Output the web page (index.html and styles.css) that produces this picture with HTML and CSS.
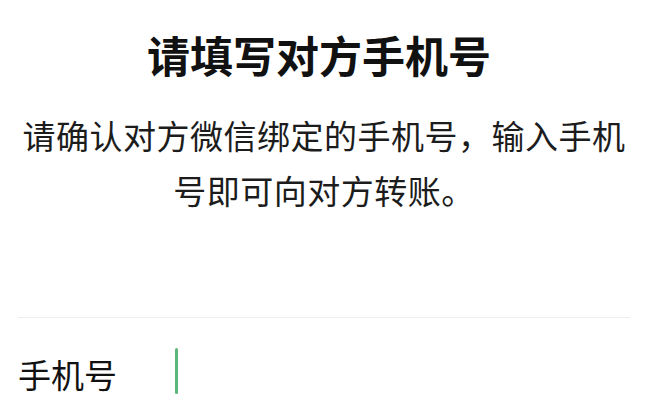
FILE: index.html
```html
<!DOCTYPE html>
<html lang="zh-CN">
<head>
    <meta charset="UTF-8">
    <title>转账到手机号</title>
    <meta name="viewport" content="width=device-width, initial-scale=1.0">
    <link rel="stylesheet" href="styles.css">
</head>
<body>
    <div class="page">
        <h1 class="title">请填写对方手机号</h1>
        <p class="desc">请确认对方微信绑定的手机号，输入手机号即可向对方转账。</p>
        <div class="field">
            <label class="label" for="phone">手机号</label>
            <span class="caret"></span>
        </div>
    </div>
</body>
</html>
```

FILE: styles.css
```css
* {
    box-sizing: border-box;
}

body {
    margin: 0;
    background-color: #fff;
    color: #111;
    font-family: "Noto Sans CJK SC", "Noto Sans", sans-serif;
}

.page {
    width: 666px;
    height: 400px;
    padding: 0 36px 0 18px;
    overflow: hidden;
}

.title {
    margin: 26px 10px 0 0;
    font-size: 43px;
    line-height: 56px;
    font-weight: 700;
    text-align: center;
}

.desc {
    margin: 26px 0 0;
    font-size: 33px;
    line-height: 55px;
    letter-spacing: 0.5px;
    color: #1c1c1c;
    text-align: center;
}

.field {
    display: flex;
    align-items: center;
    margin-top: 99px;
    border-top: 1px solid #eee;
    width: 612px;
    padding-top: 30px;
}

.label {
    width: 157px;
    font-size: 33px;
    line-height: 46px;
    color: #111;
}

.caret {
    width: 3px;
    height: 46px;
    margin-bottom: 6px;
    background-color: #5cb87a;
    border-radius: 2px;
}
```
